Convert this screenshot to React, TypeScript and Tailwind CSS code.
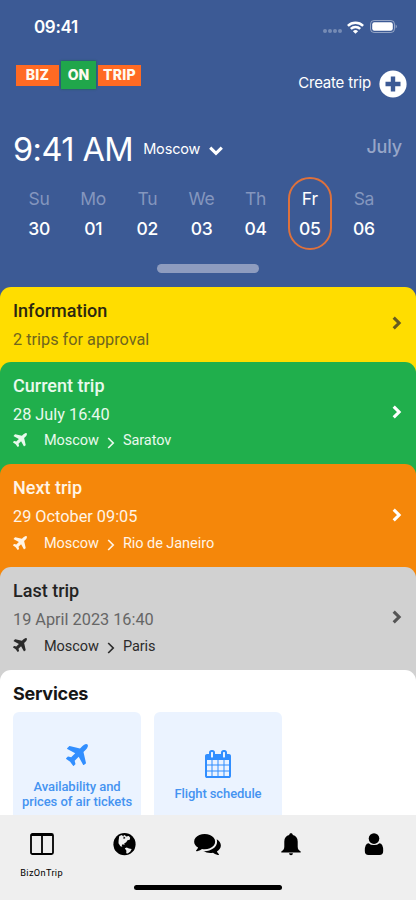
type TripCard = {
    title: string
    subtitle: string
    from?: string
    to?: string
    box: string
    titleColor: string
    subtitleColor: string
    routeColor: string
    arrowColor: string
}

const days = [
    { name: "Su", date: "30" },
    { name: "Mo", date: "01" },
    { name: "Tu", date: "02" },
    { name: "We", date: "03" },
    { name: "Th", date: "04" },
    { name: "Fr", date: "05", active: true },
    { name: "Sa", date: "06" },
]

const cards: TripCard[] = [
    {
        title: "Information",
        subtitle: "2 trips for approval",
        box: "bg-[#ffdd00] h-[86.6px]",
        titleColor: "text-[#2b2711]",
        subtitleColor: "text-[#70661e]",
        routeColor: "",
        arrowColor: "text-[#665c20]",
    },
    {
        title: "Current trip",
        subtitle: "28 July 16:40",
        from: "Moscow",
        to: "Saratov",
        box: "bg-[#20af4c] h-[114.7px]",
        titleColor: "text-[#e9f9ed]",
        subtitleColor: "text-[#e9f9ed]",
        routeColor: "text-[#e9f9ed]",
        arrowColor: "text-white",
    },
    {
        title: "Next trip",
        subtitle: "29 October 09:05",
        from: "Moscow",
        to: "Rio de Janeiro",
        box: "bg-[#f5870a] h-[114.7px]",
        titleColor: "text-[#fff4e6]",
        subtitleColor: "text-[#fff4e6]",
        routeColor: "text-[#fff4e6]",
        arrowColor: "text-white",
    },
    {
        title: "Last trip",
        subtitle: "19 April 2023 16:40",
        from: "Moscow",
        to: "Paris",
        box: "bg-[#d1d1d1] h-[114.7px]",
        titleColor: "text-[#232323]",
        subtitleColor: "text-[#666666]",
        routeColor: "text-[#2b2b2b]",
        arrowColor: "text-[#555555]",
    },
]

function PlaneIcon({ className }: { className: string }) {
    return (
        <svg viewBox="192 128 1408 1408" className={className} fill="currentColor">
            <path d="M1568 160q44 52 12 148t-108 172l-161 161 160 696q5 19-12 33l-128 96q-7 6-19 6-4 0-7-1-15-3-21-16l-279-508-259 259 53 194q5 17-8 31l-96 96q-9 9-23 9h-2q-15-2-24-13l-189-252-252-189q-11-7-13-23-1-13 9-25l96-97q9-9 23-9 6 0 8 1l194 53 259-259-508-279q-14-8-17-24-2-16 9-27l128-128q14-13 30-8l665 159 160-160q76-76 172-108t148 12z" />
        </svg>
    )
}

function CalendarIcon({ className }: { className: string }) {
    return (
        <svg viewBox="64 0 1664 1792" className={className} fill="currentColor">
            <path d="M192 1664h288v-288h-288v288zm352 0h320v-288h-320v288zm-352-352h288v-320h-288v320zm352 0h320v-320h-320v320zm-352-384h288v-288h-288v288zm736 736h320v-288h-320v288zm-384-736h320v-288h-320v288zm768 736h288v-288h-288v288zm-384-352h320v-320h-320v320zm-352-864v-288q0-13-9.5-22.5t-22.5-9.5h-64q-13 0-22.5 9.5t-9.5 22.5v288q0 13 9.5 22.5t22.5 9.5h64q13 0 22.5-9.5t9.5-22.5zm736 864h288v-320h-288v320zm-384-384h320v-288h-320v288zm384 0h288v-288h-288v288zm32-480v-288q0-13-9.5-22.5t-22.5-9.5h-64q-13 0-22.5 9.5t-9.5 22.5v288q0 13 9.5 22.5t22.5 9.5h64q13 0 22.5-9.5t9.5-22.5zm384-64v1280q0 52-38 90t-90 38h-1408q-52 0-90-38t-38-90v-1280q0-52 38-90t90-38h128v-96q0-66 47-113t113-47h64q66 0 113 47t47 113v96h384v-96q0-66 47-113t113-47h64q66 0 113 47t47 113v96h128q52 0 90 38t38 90z" />
        </svg>
    )
}

function StatusBar() {
    return (
        <div className="flex h-[54px] items-center justify-between pl-[34px] pr-[19px]">
            <span className="text-[17px] leading-none font-semibold tracking-[-0.35px]">09:41</span>
            <div className="flex items-center">
                <div className="mt-2 mr-[5px] flex gap-[1.4px]">
                    <i className="size-[3.6px] rounded-full bg-white/30" />
                    <i className="size-[3.6px] rounded-full bg-white/30" />
                    <i className="size-[3.6px] rounded-full bg-white/30" />
                    <i className="size-[3.6px] rounded-full bg-white/30" />
                </div>
                <svg viewBox="0 0 17 13" className="mr-[6px] h-[13px] w-[17px]" fill="none" stroke="currentColor" strokeWidth="2.5">
                    <path d="M.9 4.8a10.9 10.9 0 0 1 15.2 0" />
                    <path d="M3.8 7.8a6.8 6.8 0 0 1 9.4 0" />
                    <path d="M8.5 12.8 5.9 10.2a3.8 3.8 0 0 1 5.2 0z" fill="currentColor" stroke="none" />
                </svg>
                <svg viewBox="0 0 27 13" className="-mt-px h-[13px] w-[27px]">
                    <rect x=".5" y=".5" width="24" height="12" rx="3.6" fill="none" stroke="white" strokeOpacity=".45" />
                    <rect x="2.2" y="2.2" width="20.6" height="8.6" rx="2.2" fill="white" />
                    <path d="M25.7 4.6v3.8q1-.5 1-1.9t-1-1.9" fill="white" fillOpacity=".5" />
                </svg>
            </div>
        </div>
    )
}

function Logo() {
    return (
        <div className="flex items-center text-[14px] leading-none font-extrabold text-[#fffaf0]">
            <span className="flex h-[21px] w-[43px] items-center justify-center bg-[#ff6a23] tracking-[0.3px]">BIZ</span>
            <span className="mx-[2px] flex h-7 w-[35px] items-center justify-center bg-[#20a64b] shadow-[0_0_2px_#17613a]">ON</span>
            <span className="flex h-[21px] w-[43px] items-center justify-center bg-[#ff6a23] tracking-[0.3px]">TRIP</span>
        </div>
    )
}

function Card({ card }: { card: TripCard }) {
    return (
        <div className={`-mb-3 flex shrink-0 justify-between rounded-t-[11px] pr-[14px] pl-[13px] ${card.box}`}>
            <div className="pt-3">
                <h2 className={`text-[18px] leading-6 font-medium ${card.titleColor}`}>{card.title}</h2>
                <p className={`mt-[5px] text-[16.3px] leading-6 ${card.subtitleColor}`}>{card.subtitle}</p>
                {card.from && (
                    <div className={`mt-1 flex h-[22px] items-center text-[14.5px] leading-none ${card.routeColor}`}>
                        <PlaneIcon className="-mt-[3px] mr-[17px] size-[14px]" />
                        <span className="tracking-[-0.05px]">{card.from}</span>
                        <svg viewBox="0 0 8 12" className="mt-[2px] mr-2 ml-2 h-3 w-2" fill="none" stroke="currentColor" strokeWidth="1.7">
                            <path d="M1.2 1l5 5-5 5" />
                        </svg>
                        <span className="tracking-[-0.05px]">{card.to}</span>
                    </div>
                )}
            </div>
            <div className="flex items-center pb-[14px]">
                <svg viewBox="0 0 10 14" className={`h-[14px] w-[10px] ${card.arrowColor}`} fill="none" stroke="currentColor" strokeWidth="3.1">
                    <path d="M1.7 1.6L7.1 7l-5.4 5.4" />
                </svg>
            </div>
        </div>
    )
}

function App() {
    return (
        <div className="flex h-[900px] w-[416px] flex-col overflow-hidden bg-white font-[Roboto,sans-serif]">
            <header className="h-[287px] shrink-0 bg-[#3c5a95] font-[Inter,sans-serif] text-white">
                <StatusBar />
                <div className="flex h-[58px] justify-between pr-[9px] pl-4">
                    <div className="pt-[7px]">
                        <Logo />
                    </div>
                    <div className="flex items-center gap-2 pt-[1px]">
                        <span className="text-[15px] tracking-[-0.2px]">Create trip</span>
                        <svg viewBox="0 0 28 28" className="size-7">
                            <circle cx="14" cy="14" r="13.6" fill="white" />
                            <path d="M14 6.5v15M6.5 14h15" stroke="#3c5a95" strokeWidth="4.4" />
                        </svg>
                    </div>
                </div>
                <div className="flex h-[74px] items-center pr-[14px] pl-[13px]">
                    <span className="mt-[2px] text-[32.5px] leading-none tracking-[-0.55px]">9:41 AM</span>
                    <span className="ml-[10px] text-[14.5px] leading-none tracking-[-0.15px]">Moscow</span>
                    <svg viewBox="0 0 14 10" className="mt-[3px] ml-[9px] h-[10px] w-[14px]" fill="none" stroke="currentColor" strokeWidth="3.1">
                        <path d="M1.2 1.7L7 7.4l5.8-5.7" />
                    </svg>
                    <span className="-mt-1 ml-auto text-[18px] leading-none font-medium tracking-[-0.15px] text-[#97a6c8]">July</span>
                </div>
                <div className="-mt-[9px] ml-3 grid w-[379px] grid-cols-7">
                    {days.map(day => (
                        <div key={day.name} className="flex justify-center">
                            <div
                                className={`flex h-[73px] w-11 flex-col items-center border-2 pt-[9px] text-[17.5px] leading-[22px] tracking-[-0.3px] ${day.active ? "rounded-full border-[#de713c]" : "border-transparent"}`}
                            >
                                <span className={day.active ? "text-white" : "text-[#8496be]"}>{day.name}</span>
                                <span className="mt-2 font-medium">{day.date}</span>
                            </div>
                        </div>
                    ))}
                </div>
                <div className="mx-auto mt-[14px] h-[9px] w-[102px] rounded-full bg-[#8e9cbf]" />
            </header>

            <main className="flex h-[528px] shrink-0 flex-col overflow-hidden bg-[#3c5a95]">
                {cards.map(card => (
                    <Card key={card.title} card={card} />
                ))}
                <section className="grow rounded-t-[11px] bg-white px-[13px] pt-3">
                    <h2 className="font-[Inter,sans-serif] text-[18px] leading-6 font-bold tracking-[-0.25px] text-[#161616]">Services</h2>
                    <div className="mt-[6.6px] flex gap-[13px] text-center text-[13px] leading-[15px] font-medium text-[#4593f1]">
                        <div className="flex h-[103px] w-32 flex-col items-center rounded-t-md bg-[#ebf3ff] pt-8">
                            <PlaneIcon className="size-[22px] text-[#318eff]" />
                            <p className="mt-[13px] tracking-[-0.05px]">
                                Availability and
                                <br />
                                prices of air tickets
                            </p>
                        </div>
                        <div className="flex h-[103px] w-32 flex-col items-center rounded-t-md bg-[#ebf3ff] pt-[38px]">
                            <CalendarIcon className="h-[28px] w-[26px] text-[#318eff]" />
                            <p className="mt-[8px] tracking-[-0.1px]">Flight schedule</p>
                        </div>
                    </div>
                </section>
            </main>

            <nav className="flex h-[85px] shrink-0 flex-col items-center bg-[#efefef] text-black">
                <div className="grid w-full grid-cols-5 pt-[18px]">
                    <div className="flex h-[46px] flex-col items-center">
                        <svg viewBox="0 0 24 22" className="h-[22px] w-6">
                            <rect x="1" y="1" width="22" height="20" rx="1.5" fill="none" stroke="currentColor" strokeWidth="1.8" />
                            <path d="M1 2h22M12 2v19" stroke="currentColor" strokeWidth="1.8" />
                        </svg>
                        <span className="mt-[12px] text-[9.2px] leading-3 tracking-[0.35px]">BizOnTrip</span>
                    </div>
                    <div className="flex flex-col items-center">
                        <svg viewBox="0 0 23 23" className="size-[23px]">
                            <circle cx="11.5" cy="11.2" r="11.1" fill="currentColor" />
                            <path
                                d="M6.2 3.2l2.3-1.1 1.5.9 1.8-1.1 1.3 1.5 2.7-.5 1.4 1.8-.5 2-2.2.6-1.3 1.9-2 1.3.4 1.4-1.7-.7-1.2.8.6 1.8-1.9-.5-1.9-3.1.1-2.7z"
                                fill="#efefef"
                            />
                            <path d="M10.5 3.3l2 1.8-1.9.8z" fill="currentColor" />
                            <path d="M11.8 15.3l2-.8 2.2.9 2.7.7-1.5 2.7-2.5 1.7-1.5-.3.2-2.5z" fill="#efefef" />
                        </svg>
                    </div>
                    <div className="flex flex-col items-center pt-[1px]">
                        <svg viewBox="0 256 1792 1408" className="h-[21px] w-[27px]" fill="currentColor">
                            <path d="M1408 768q0 139-94 257t-256.5 186.5-353.5 68.5q-86 0-176-16-124 88-278 128-36 9-86 16h-3q-11 0-20.5-8t-11.5-21q-1-3-1-6.5t.5-6.5 2-6l2.5-5 3.5-5.5 4-5 4.5-5 4-4.5q5-6 23-25t26-29.5 22.5-29 25-38.5 20.5-44q-124-72-195-177t-71-224q0-139 94-257t256.5-186.5 353.5-68.5 353.5 68.5 256.5 186.5 94 257zm384 256q0 120-71 224.5t-195 176.5q10 24 20.5 44t25 38.5 22.5 29 26 29.5 23 25q1 1 4 4.5t4.5 5 4 5 3.5 5.5l2.5 5 2 6 .5 6.5-1 6.5q-3 14-13 22t-22 7q-50-7-86-16-154-40-278-128-90 16-176 16-271 0-472-132 58 4 88 4 161 0 309-45t264-129q125-92 192-212t67-254q0-77-23-152 129 71 204 178t75 230z" />
                        </svg>
                    </div>
                    <div className="flex flex-col items-center">
                        <svg viewBox="0 0 20 23" className="h-[23px] w-5" fill="currentColor">
                            <path d="M10 .3c1 0 1.7.6 1.8 1.6 3 .8 4.9 3 4.9 6.5v5.2c0 2.5.9 3.8 3 5v.9H.3v-.9c2.1-1.2 3-2.5 3-5V8.4c0-3.5 1.9-5.7 4.9-6.5C8.3.9 9 .3 10 .3z" />
                            <path d="M8 20.3h4q-.2 2-2 2t-2-2z" />
                        </svg>
                    </div>
                    <div className="flex flex-col items-center">
                        <svg viewBox="0 0 20 23" className="h-[23px] w-5" fill="currentColor">
                            <circle cx="10" cy="5.6" r="5.3" />
                            <path d="M4.6 10.2q-3.800.3-3.800 7.500 0 4.400 3.700 4.400h11q3.700 0 3.700-4.400 0-7.200-3.800-7.500-2 1.900-5.400 1.900t-5.400-1.900z" />
                        </svg>
                    </div>
                </div>
                <div className="mt-[6px] h-[5px] w-[148px] rounded-full bg-black" />
            </nav>
        </div>
    )
}

export default App
